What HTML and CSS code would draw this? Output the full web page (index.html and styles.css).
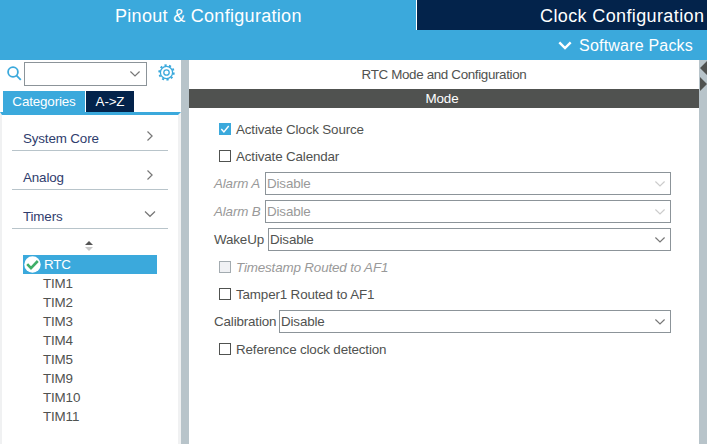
FILE: index.html
```html
<!DOCTYPE html>
<html lang="en">
<head>
<meta charset="utf-8">
<title>Pinout &amp; Configuration</title>
<link rel="stylesheet" href="styles.css">
</head>
<body>
<nav class="tabs">
  <div class="tab active"><span class="t-pinout">Pinout &amp; Configuration</span></div>
  <div class="tab dark"><span class="t-clock">Clock Configuration</span></div>
</nav>
<div class="subbar">
  <svg width="14" height="9" viewBox="0 0 14 9"><path d="M1.3 1.3 7 7 12.7 1.3" fill="none" stroke="#fff" stroke-width="2.4"/></svg>
  <span>Software Packs</span>
</div>
<main class="body">
  <aside class="side">
    <div class="search">
      <svg class="lens" width="15" height="15" viewBox="0 0 15 15"><circle cx="6" cy="6" r="4.9"/><path d="m9.6 9.6 4.2 4.2"/></svg>
      <div class="box find"><svg class="chev" width="10" height="6" viewBox="0 0 10 6"><path d="M.4.5 5 5 9.6.5"/></svg></div>
      <svg class="gear" width="17" height="17" viewBox="0 0 17 17"><circle class="teeth" cx="8.5" cy="8.5" r="7.3"/><circle cx="8.5" cy="8.5" r="6.1"/><circle cx="8.5" cy="8.5" r="2.7"/></svg>
    </div>
    <div class="cats"><div class="cat on">Categories</div><div class="cat az">A-&gt;Z</div></div>
    <div class="panel">
      <div class="group first"><span>System Core</span><svg class="chev" width="12" height="10" viewBox="0 0 12 10"><path d="m3.5.5 4.6 4.5-4.6 4.5"/></svg></div>
      <div class="group"><span>Analog</span><svg class="chev" width="12" height="10" viewBox="0 0 12 10"><path d="m3.5.5 4.6 4.5-4.6 4.5"/></svg></div>
      <div class="group"><span>Timers</span><svg class="chev" width="12" height="10" viewBox="0 0 12 10"><path d="M1 2.5 6 7.3l5-4.8"/></svg></div>
      <svg class="sort" width="8" height="10" viewBox="0 0 8 10"><path d="M0 4 4 0l4 4z" fill="#555"/><path d="M0 6h8l-4 4z" fill="#c8c8c8"/></svg>
      <ul class="list">
        <li class="sel"><svg width="17" height="17" viewBox="0 0 17 17"><circle cx="8.5" cy="8.5" r="8.2" fill="#fff"/><path d="m3.2 8.2 3.8 4 6.8-7.2" fill="none" stroke="#3fae68" stroke-width="2.6"/></svg><span>RTC</span></li>
        <li>TIM1</li><li>TIM2</li><li>TIM3</li><li>TIM4</li><li>TIM5</li><li>TIM9</li><li>TIM10</li><li>TIM11</li>
      </ul>
    </div>
  </aside>
  <div class="split"></div>
  <section class="content">
    <h1>RTC Mode and Configuration</h1>
    <h2>Mode</h2>
    <div class="form">
      <label class="check r1"><i class="cb checked"><svg width="12" height="12" viewBox="0 0 12 12"><path d="m2.3 6 2.6 3 4.8-6" fill="none" stroke="#fff" stroke-width="1.4"/></svg></i><span>Activate Clock Source</span></label>
      <label class="check r2"><i class="cb"></i><span>Activate Calendar</span></label>
      <div class="field off"><span class="name alarm">Alarm A</span><div class="box"><span>Disable</span><svg class="chev" width="10" height="6" viewBox="0 0 10 6"><path d="M.4.5 5 5 9.6.5"/></svg></div></div>
      <div class="field off"><span class="name alarm">Alarm B</span><div class="box"><span>Disable</span><svg class="chev" width="10" height="6" viewBox="0 0 10 6"><path d="M.4.5 5 5 9.6.5"/></svg></div></div>
      <div class="field"><span class="name wake">WakeUp</span><div class="box"><span>Disable</span><svg class="chev" width="10" height="6" viewBox="0 0 10 6"><path d="M.4.5 5 5 9.6.5"/></svg></div></div>
      <label class="check r3 off"><i class="cb"></i><span>Timestamp Routed to AF1</span></label>
      <label class="check r4"><i class="cb"></i><span>Tamper1 Routed to AF1</span></label>
      <div class="field"><span class="name calib">Calibration</span><div class="box"><span>Disable</span><svg class="chev" width="10" height="6" viewBox="0 0 10 6"><path d="M.4.5 5 5 9.6.5"/></svg></div></div>
      <label class="check r5"><i class="cb"></i><span>Reference clock detection</span></label>
    </div>
  </section>
  <div class="split right"><svg width="8" height="32" viewBox="0 0 8 32"><path d="M8 1v14L1 8zM1 17v14l7-7z" fill="#505250"/></svg></div>
</main>
</body>
</html>
```
FILE: styles.css
```css
* { box-sizing: border-box; }
body {
  margin: 0;
  width: 707px;
  height: 444px;
  overflow: hidden;
  display: flex;
  flex-direction: column;
  background: #fff;
  color: #505250;
  font: 13.4px/19px "Liberation Sans", Arial, sans-serif;
  letter-spacing: -.15px;
  white-space: nowrap;
}
svg { display: block; flex: none; }
.tabs { display: flex; height: 30px; color: #fff; font-size: 18px; line-height: 32px; }
.tab.active { width: 417px; background: #3ba9dc; border-right: 1px solid #fff; padding-left: 115px; }
.tab.dark { flex: 1; background: #03234b; padding-left: 123px; }
.t-pinout { letter-spacing: .3px; }
.t-clock { letter-spacing: .38px; }
.subbar {
  height: 30px;
  background: #3ba9dc;
  color: #fff;
  display: flex;
  align-items: center;
  justify-content: flex-end;
  gap: 7px;
  padding-right: 14px;
  font-size: 16px;
  letter-spacing: .2px;
}
.body { flex: 1; display: flex; min-height: 0; }
.side { width: 181px; display: flex; flex-direction: column; }
.search { display: flex; height: 31px; padding: 2px 0 0 7px; }
.lens { margin-top: 4px; fill: none; stroke: #3ba9dc; stroke-width: 1.8; }
.box {
  display: flex;
  align-items: center;
  justify-content: space-between;
  flex: 1;
  height: 23px;
  padding: 0 5px 0 1px;
  border: 1px solid #8c9499;
  background: #fff;
}
.box.find { flex: none; width: 123px; height: 24px; justify-content: flex-end; margin-left: 2px; padding-right: 6px; }
.chev { fill: none; stroke: #777; stroke-width: 1.2; }
.gear { margin: 2px 0 0 11px; fill: none; stroke: #3ba9dc; stroke-width: 1.3; }
.gear .teeth { stroke-width: 1.8; stroke-dasharray: 2.2 2.387; }
.cats { display: flex; gap: 1px; height: 21px; padding-left: 3px; color: #fff; line-height: 21px; text-align: center; }
.cat.on { width: 82px; background: #3ba9dc; }
.cat.az { width: 48px; background: #03234b; }
.panel {
  flex: 1;
  border-left: 2px solid #f0f1f2;
  border-right: 3px solid #f0f1f2;
  border-top: 3px solid #3ba9dc;
}
.group {
  width: 156px;
  height: 39px;
  margin-left: 10px;
  padding: 12px 12px 0 11px;
  display: flex;
  justify-content: space-between;
  border-bottom: 1px solid #b8c4ca;
  color: #2f3d6d;
  line-height: 30px;
}
.group.first { height: 36px; padding-top: 9px; }
.group .chev { margin-top: 7px; }
.sort { margin: 12px 0 0 83px; }
.list { list-style: none; margin: 4px 0 0 21px; padding: 0; width: 134px; }
.list li { height: 19px; padding-left: 20px; line-height: 19px; }
.list .sel { display: flex; align-items: center; gap: 3px; padding-left: 1px; background: #3ba9dc; color: #fff; }
.split { width: 8px; background: #b8c4ca; }
.content { flex: 1; }
h1, h2 { margin: 0; font-size: 13.4px; font-weight: 400; text-align: center; }
h1 { height: 29px; line-height: 30px; letter-spacing: -.35px; }
h2 { height: 19px; line-height: 19px; background: #505250; color: #fff; padding-right: 4px; }
.form { padding: 8px 28px 0 25px; }
.check { display: flex; align-items: center; gap: 5px; margin-left: 5px; }
.r1 { height: 26px; }
.r2 { height: 28px; margin-bottom: 2px; }
.r3, .r5 { height: 22px; }
.r4 { height: 32px; }
.cb { width: 12px; height: 12px; border: 1px solid #505250; }
.cb.checked { border: 0; background: #3ba9dc; }
.field { display: flex; align-items: center; height: 23px; margin-bottom: 5px; }
.name.alarm { width: 51px; }
.name.wake { width: 54px; }
.name.calib { width: 65px; }
.off { color: #999; }
.off .name, .off.check { font-style: italic; }
.off .chev { stroke: #ccc; }
.off .cb { border-color: #a3abb0; background: #f0f1f4; }
```
